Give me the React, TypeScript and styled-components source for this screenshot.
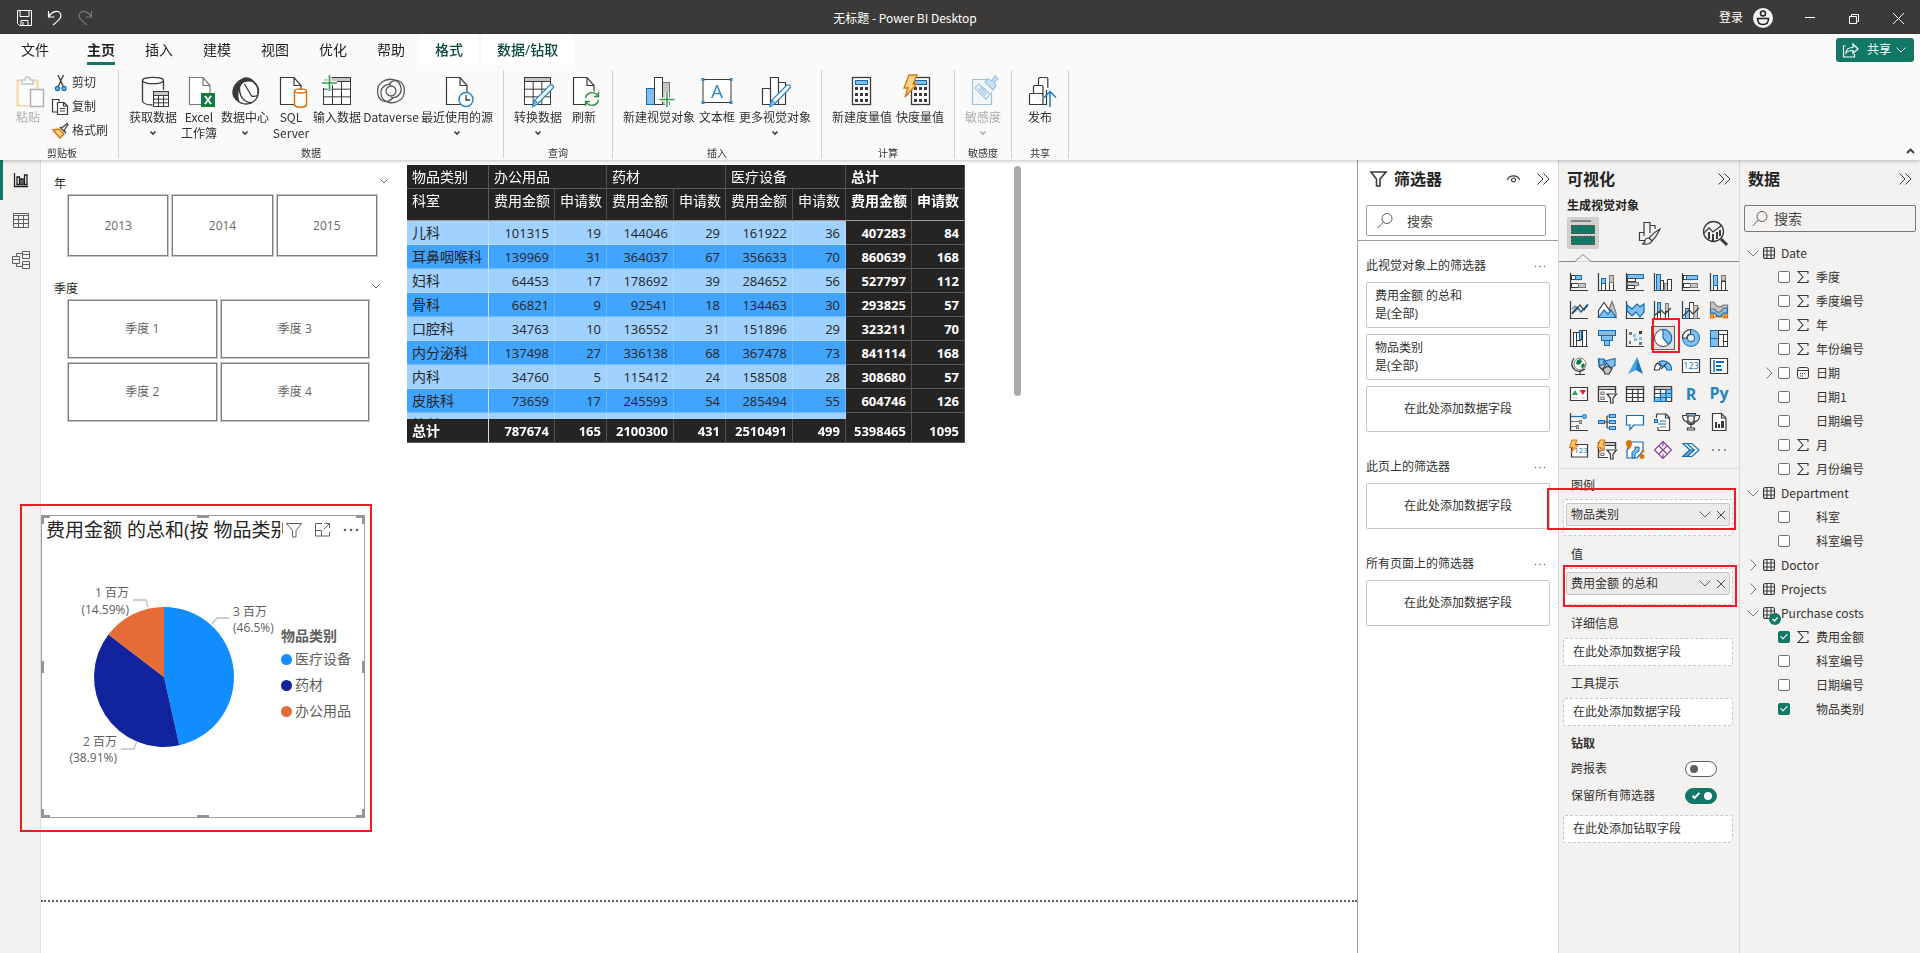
import React from "react";
import styled, { createGlobalStyle, css } from "styled-components";

const DARK = "#3b3a39";
const BLUE = "#0f6cb8";
const SKY = "#83beec";
const GREEN = "#117865";
const GREY = "#c8c6c4";
const MID = "#797775";
const ORANGE = "#d9730d";
const RED = "#ed1c24";

const Global = createGlobalStyle`
  *, *::before, *::after { box-sizing: border-box; }
  body {
    margin: 0;
    background: #fff;
    color: #323130;
    font: 12px/16px "Open Sans", "Noto Sans CJK SC", sans-serif;
  }
  button, input { font: inherit; color: inherit; }
  button { margin: 0; padding: 0; border: 0; background: none; text-align: center; }
  h2, h3 { margin: 0; font-weight: 600; }
  svg { display: block; flex: none; overflow: visible; }
`;

const Shell = styled.div`
  display: flex;
  flex-direction: column;
  min-height: 100vh;
`;

/* ---------- title bar ---------- */

const TitleBar = styled.header`
  display: grid;
  grid-template-columns: 1fr auto 1fr;
  align-items: center;
  height: 34px;
  padding: 2px 16px 0;
  background: ${DARK};
  color: #fff;
`;
const TitleLeft = styled.div`
  display: flex;
  gap: 14px;
`;
const TitleText = styled.div`
  margin-right: 110px;
  font-family: "Noto Sans CJK SC", sans-serif;
`;
const TitleRight = styled.div`
  display: flex;
  justify-content: flex-end;
  align-items: center;
`;
const SignIn = styled.button`
  display: flex;
  align-items: center;
  gap: 10px;
  margin-right: 31px;
`;
const WindowControls = styled.div`
  display: flex;
  gap: 32px;
`;
const WindowButton = styled.button`
  display: flex;
  justify-content: center;
  width: 12px;
`;

/* ---------- ribbon ---------- */

const RibbonBox = styled.div`
  position: relative;
  z-index: 3;
  height: 126px;
  background: #fafafa;
  box-shadow: 0 1px 4px rgba(0, 0, 0, 0.25);
`;
const TabRow = styled.nav`
  display: flex;
  height: 31px;
  padding-left: 6px;
`;
const Tab = styled.button<{ $active?: boolean; $context?: boolean; $after?: number }>`
  position: relative;
  padding: 0 15px;
  font-size: 14px;
  line-height: 31px;
  color: #201f1e;
  margin-right: ${(p) => p.$after ?? 0}px;
  ${(p) => p.$context && css`
    background: #fff;
    color: #0c4a40;
    font-weight: 500;
  `}
  ${(p) => p.$active && css`
    font-weight: 700;
    &::after {
      content: "";
      position: absolute;
      left: 15px;
      right: 15px;
      bottom: 0;
      height: 3px;
      background: ${GREEN};
    }
  `}
`;
const ShareButton = styled.button`
  display: flex;
  align-items: center;
  gap: 5px;
  height: 24px;
  margin: 4px 6px 0 auto;
  padding: 0 8px 0 7px;
  border-radius: 3px;
  background: ${GREEN};
  color: #fff;
  span { margin-left: 3px; }
`;
const ToolRow = styled.div`
  display: flex;
  margin-top: 5px;
`;
const Group = styled.section<{ $clip?: boolean }>`
  display: flex;
  flex-direction: column;
  height: 88px;
  padding: 0 10px 0 ${(p) => (p.$clip ? 16 : 10)}px;
  border-right: 1px solid #d2d0ce;
`;
const GroupBody = styled.div`
  display: flex;
  gap: 4px;
  flex: 1;
`;
const GroupName = styled.div`
  font-size: 10px;
  line-height: 10px;
  text-align: center;
`;
const Tool = styled.button<{ $w: number; $off?: boolean }>`
  display: flex;
  flex-direction: column;
  align-items: center;
  width: ${(p) => p.$w}px;
  padding-top: 6px;
  white-space: nowrap;
  font-family: "Noto Sans CJK SC", sans-serif;
  opacity: ${(p) => (p.$off ? 0.4 : 1)};
  svg + span { margin-top: 1px; }
  span + svg { margin-top: 6px; }
`;
const SmallTools = styled.div`
  display: flex;
  flex-direction: column;
  gap: 8px;
  margin: 5px 0 0 8px;
`;
const SmallTool = styled.button`
  display: flex;
  align-items: center;
  gap: 3px;
`;
const Collapse = styled.button`
  position: absolute;
  right: 5px;
  bottom: 6px;
`;

const Doc = ({ x = 5, c = DARK }: { x?: number; c?: string }) => (
  <path d={`M${x + 0.5} 1.5h13.5l7 8v19h-20.5zM${x + 14} 1.5v8h7`} fill="#fff" stroke={c} strokeWidth="1.2" />
);
const Pencil = () => (
  <g>
    <path d="M11 30l2-6L28 9q3-1 3.500 2.500L16 27.500z" fill="#fff" stroke="#2b88c8" strokeWidth="1.3" />
    <path d="M10.500 31l2.500-7 3.500 3.500z" fill={SKY} stroke="#2b88c8" />
  </g>
);
const Cells = ({ x, y, w, h, c = DARK }: { x: number; y: number; w: number; h: number; c?: string }) => (
  <g fill="none" stroke={c}>
    <rect x={x} y={y} width={w} height={h} fill="#fff" />
    <path d={`M${x} ${y + 2}h${w}`} stroke={GREY} strokeWidth="3" />
    <rect x={x} y={y} width={w} height={h} />
    <path d={`M${x} ${y + 4}h${w}M${x} ${y + 4 + (h - 4) / 3}h${w}M${x} ${y + 4 + ((h - 4) * 2) / 3}h${w}M${x + w / 3} ${y + 4}v${h - 4}M${x + (w * 2) / 3} ${y + 4}v${h - 4}`} />
  </g>
);
const Calc = ({ x }: { x: number }) => (
  <g>
    <rect x={x + 0.5} y="1.5" width="18" height="27" fill="#fff" stroke={DARK} strokeWidth="1.3" />
    <rect x={x + 3.5} y="4.5" width="12" height="4" fill={SKY} stroke={BLUE} />
    {[11, 17, 23].map((y) => [3, 8, 13].map((dx) => (
      <rect key={`${y}${dx}`} x={x + dx} y={y} width="3" height="3" fill={DARK} />
    )))}
  </g>
);

const toolIcons: Record<string, React.ReactNode> = {
  get: (
    <g>
      <path d="M5.500 4.500v21c2 3 6 3.500 10 3.500M26.500 4.500V14" fill="none" stroke={DARK} strokeWidth="1.3" />
      <ellipse cx="16" cy="4.5" rx="10.5" ry="3.2" fill="#fff" stroke={DARK} strokeWidth="1.3" />
      <Cells x={16.5} y={15.5} w={15} h={15} />
    </g>
  ),
  excel: (
    <g>
      <Doc x={6} c={MID} />
      <rect x="18" y="17" width="14" height="14" fill="#107c41" />
      <path d="M22 20l6 8M28 20l-6 8" stroke="#fff" strokeWidth="1.8" />
    </g>
  ),
  hub: (
    <g fill="none" stroke={DARK} strokeWidth="1.3">
      <circle cx="17" cy="15.5" r="12.5" fill="#fff" />
      <path d="M10 26Q2 22 3.500 14 5 8 9.500 6.500 15-2 23.500 3.500 24 5 24 6 16 4 12.500 8.500q-5 8-2 17.500z" fill={DARK} stroke="none" />
      <path d="M10.500 11q-.5 10 6 14 3 2 6 1.500M15.500 8l7 12q4 1 6.500-1M24 6q6 4 5 12" />
    </g>
  ),
  sql: (
    <g>
      <Doc />
      <path d="M19.500 15v14c2 3 10 3 12 0V15" fill="#fff" stroke={ORANGE} strokeWidth="1.5" />
      <ellipse cx="25.5" cy="15" rx="6" ry="2" fill="#fff" stroke={ORANGE} strokeWidth="1.5" />
    </g>
  ),
  enter: (
    <g>
      <Cells x={2.5} y={1.5} w={27} h={27} />
      <path d="M1 1h8M1 1v11" stroke="#fafafa" strokeWidth="4" />
      <path d="M8.500-1v16M1 7h15" stroke="#fafafa" strokeWidth="4" />
      <path d="M8.500-1v16M1 7h15" stroke="#2e9e4f" strokeWidth="1.6" />
    </g>
  ),
  dataverse: (
    <g fill="none" stroke="#5c5a58" strokeWidth="1.3">
      <path d="M8 25C1 22 1 10 7 6c7-5 18-3 19 6 1 7-6 11-10 9" />
      <path d="M24 5c7 3 7 15 1 19-7 5-18 3-19-6-1-7 6-11 10-9" />
      <circle cx="16" cy="15" r="5" />
      <path d="M8 25c5 2 8-1 10-3M24 5c-5-2-8 1-10 3" />
    </g>
  ),
  recent: (
    <g>
      <Doc />
      <circle cx="25" cy="23.5" r="7" fill="#fff" stroke="#2b88c8" strokeWidth="1.5" />
      <path d="M25 19v5h4" fill="none" stroke={DARK} strokeWidth="1.3" />
    </g>
  ),
  transform: (
    <g>
      <Cells x={2.5} y={1.5} w={26} h={27} />
      <Pencil />
    </g>
  ),
  refresh: (
    <g>
      <Doc />
      <circle cx="24" cy="23" r="8" fill="#fafafa" />
      <path d="M17.500 22a6.800 6.800 0 0 1 12.500-2M30.500 24a6.800 6.800 0 0 1-12.500 2M30.500 16v4.500H26M17.500 30v-4.500H22" fill="none" stroke="#2e8f48" strokeWidth="1.4" />
    </g>
  ),
  visual: (
    <g>
      <rect x="19.5" y="6.5" width="7" height="22" fill={GREY} stroke={MID} />
      <rect x="3.5" y="12.5" width="8" height="16" fill={SKY} stroke={BLUE} />
      <rect x="11.5" y="1.5" width="8" height="27" fill="#fff" stroke={DARK} />
      <path d="M24 16v15M16.500 23.500h15" stroke="#fafafa" strokeWidth="4" />
      <path d="M24 16v15M16.500 23.500h15" stroke="#2e9e4f" strokeWidth="1.5" />
    </g>
  ),
  textbox: (
    <g>
      <rect x="2" y="3.5" width="28" height="23" fill="#fff" stroke={DARK} />
      <text x="16" y="22" fontFamily="Open Sans" fontSize="19" fill="#2b88c8" textAnchor="middle">A</text>
      {[[0.5, 2], [28.5, 2], [0.5, 25], [28.5, 25]].map(([x, y]) => (
        <rect key={`${x}-${y}`} x={x} y={y} width="3" height="3" fill="#2b88c8" />
      ))}
    </g>
  ),
  more: (
    <g>
      <path d="M3.500 28.500v-16h8v16zM11.500 1.500h8v27h-8zM19.500 6.500h7v22h-7z" fill="#fff" stroke={DARK} strokeWidth="1.2" />
      <Pencil />
    </g>
  ),
  measure: <Calc x={6} />,
  quick: (
    <g>
      <Calc x={7} />
      <path d="M5-1h8L9 8h4L1 21l3-9H0z" fill="#fbd38b" stroke={ORANGE} strokeWidth="1.3" />
    </g>
  ),
  sensitivity: (
    <g stroke={BLUE} fill="none" strokeWidth="1.2">
      <path d="M20 3.500H5.500v25h19V16" fill="#e8f3fb" />
      <path d="M8 12l4-4 11 10-4 5z" fill="#fff" />
      <path d="M11.500 12.500l7 7M13 11l7 7" />
      <path d="M18 6l3-3 4 2 3-5 3 3-4 3 2 4-3 4z" fill={SKY} />
    </g>
  ),
  publish: (
    <g fill="#fff" stroke={DARK} strokeWidth="1.2">
      <path d="M14.500 10v-7.500l1-1h7.500l.8 1V12M9.500 18V10.500l1-1h7.500l1 1v18M5.500 28.500h13.500V18.500l-1-1H6.500l-1 1v9z" />
      <path d="M13.500 28.500h9V14" fill="none" />
      <path d="M26 31V15M20 21.500l6-6 6 6" fill="none" stroke="#1a7bbf" strokeWidth="1.5" />
    </g>
  ),
};

const Chevron = ({ w = 12, c = "#605e5c", t = 1 }: { w?: number; c?: string; t?: number }) => (
  <svg width={w} height={w / 2 + 1} viewBox={`0 0 ${w} ${w / 2 + 1}`} fill="none" stroke={c} strokeWidth={t} aria-hidden="true">
    <path d={`M.5.5l${w / 2 - 0.5} ${w / 2 - 0.5} ${w / 2 - 0.5}-${w / 2 - 0.5}`} />
  </svg>
);

type ToolDef = { icon: string; lines: string[]; w: number; menu?: boolean; off?: boolean };
const groups: { name: string; tools: ToolDef[] }[] = [
  {
    name: "数据",
    tools: [
      { icon: "get", lines: ["获取数据"], w: 48, menu: true },
      { icon: "excel", lines: ["Excel", "工作簿"], w: 36 },
      { icon: "hub", lines: ["数据中心"], w: 48, menu: true },
      { icon: "sql", lines: ["SQL", "Server"], w: 36 },
      { icon: "enter", lines: ["输入数据"], w: 48 },
      { icon: "dataverse", lines: ["Dataverse"], w: 52 },
      { icon: "recent", lines: ["最近使用的源"], w: 72, menu: true },
    ],
  },
  {
    name: "查询",
    tools: [
      { icon: "transform", lines: ["转换数据"], w: 48, menu: true },
      { icon: "refresh", lines: ["刷新"], w: 36 },
    ],
  },
  {
    name: "插入",
    tools: [
      { icon: "visual", lines: ["新建视觉对象"], w: 72 },
      { icon: "textbox", lines: ["文本框"], w: 36 },
      { icon: "more", lines: ["更多视觉对象"], w: 72, menu: true },
    ],
  },
  {
    name: "计算",
    tools: [
      { icon: "measure", lines: ["新建度量值"], w: 60 },
      { icon: "quick", lines: ["快度量值"], w: 48 },
    ],
  },
  { name: "敏感度", tools: [{ icon: "sensitivity", lines: ["敏感度"], w: 36, menu: true, off: true }] },
  { name: "共享", tools: [{ icon: "publish", lines: ["发布"], w: 36 }] },
];

const Ribbon = () => (
  <RibbonBox>
    <TabRow>
      <Tab $after={8}>文件</Tab>
      <Tab $active>主页</Tab>
      {["插入", "建模", "视图", "优化", "帮助"].map((t) => <Tab key={t}>{t}</Tab>)}
      <Tab $context $after={4}>格式</Tab>
      <Tab $context>数据/钻取</Tab>
      <ShareButton>
        <svg width="16" height="16" fill="none" stroke="#fff" strokeWidth="1.2">
          <path d="M2.500 4H.5v11h11v-3M3 11c0-4 3-5.500 7-5.500V2l5 5-5 4.500V8.500C6 8.500 4 9.500 3 11z" />
        </svg>
        <span>共享</span>
        <Chevron w={10} c="#fff" />
      </ShareButton>
    </TabRow>
    <ToolRow>
      <Group $clip>
        <GroupBody>
          <Tool $w={24} $off>
            <svg width="32" height="32" fill="#fff" strokeWidth="1.4">
              <path d="M5.500 4.500h20v25h-20z" fill="#fdf1dd" stroke="#f0a030" strokeWidth="2" />
              <path d="M8 9h15v20H8z" stroke="none" />
              <path d="M10 8V4h3c0-4 5-4 5 0h3v4z" stroke={MID} />
              <path d="M18.500 13.500h13v17h-13z" stroke={DARK} />
            </svg>
            <span>粘贴</span>
          </Tool>
          <SmallTools>
            <SmallTool>
              <svg width="17" height="16" fill="none" stroke={DARK} strokeWidth="1.3">
                <path d="M6 0l5.500 12M11.500 0L6 12" />
                <circle cx="5.5" cy="13.5" r="2" fill={SKY} stroke={BLUE} />
                <circle cx="12" cy="13.5" r="2" fill={SKY} stroke={BLUE} />
              </svg>
              剪切
            </SmallTool>
            <SmallTool>
              <svg width="17" height="16" fill="#fff" stroke={DARK} strokeWidth="1.2">
                <path d="M7 2.500V.5H.5v12.500H5M5.500 3.500h6.500l3.500 3.500v8.500h-10zM11.500 3.500V7h4M8 9.500h5M8 12h5" />
              </svg>
              复制
            </SmallTool>
            <SmallTool>
              <svg width="17" height="16" fill="none" stroke={DARK} strokeWidth="1.2">
                <path d="M1 7l6-1 5 5-4 4z" fill="#fbd38b" stroke={ORANGE} strokeWidth="1.5" />
                <path d="M8 4l6 6M9 5l2-1 4-3.500 1 1L13 6l-.5 2.500" fill="#fff" />
              </svg>
              格式刷
            </SmallTool>
          </SmallTools>
        </GroupBody>
        <GroupName>剪贴板</GroupName>
      </Group>
      {groups.map((g) => (
        <Group key={g.name}>
          <GroupBody>
            {g.tools.map((t) => (
              <Tool key={t.icon} $w={t.w} $off={t.off}>
                <svg width="32" height="32" aria-hidden="true">{toolIcons[t.icon]}</svg>
                {t.lines.map((l) => <span key={l}>{l}</span>)}
                {t.menu && <Chevron w={6} c={DARK} t={1.6} />}
              </Tool>
            ))}
          </GroupBody>
          <GroupName>{g.name}</GroupName>
        </Group>
      ))}
    </ToolRow>
    <Collapse aria-label="折叠功能区">
      <svg width="9" height="6" fill="none" stroke={DARK} strokeWidth="1.8"><path d="M1 5l3.500-3.500L8 5" /></svg>
    </Collapse>
  </RibbonBox>
);

/* ---------- workspace ---------- */

const Workspace = styled.div`
  display: flex;
  flex: 1;
`;
const Rail = styled.nav`
  flex: none;
  width: 41px;
  background: #f3f2f1;
  border-right: 1px solid #e1dfdd;
`;
const RailButton = styled.button<{ $active?: boolean }>`
  display: flex;
  align-items: center;
  justify-content: center;
  width: 40px;
  height: 40px;
  padding-right: 2px;
  border-left: 3px solid ${(p) => (p.$active ? GREEN : "transparent")};
`;
const Canvas = styled.main`
  flex: 1;
  min-width: 0;
`;
const TopVisuals = styled.div`
  display: flex;
  padding-top: 5px;
`;
const Slicers = styled.div`
  width: 366px;
  padding: 8px 0 0 13px;
`;
const Slicer = styled.section<{ $w: number }>`
  width: ${(p) => p.$w}px;
  margin-bottom: 21px;
`;
const SlicerHead = styled.div`
  display: flex;
  justify-content: space-between;
  align-items: center;
  height: 21px;
  color: #201f1e;
  svg { margin-bottom: 4px; }
`;
const Tiles = styled.div<{ $cols: number }>`
  display: grid;
  grid-template-columns: repeat(${(p) => p.$cols}, 1fr);
  gap: ${(p) => (p.$cols === 2 ? "3px 2px" : "2px")};
  margin: 0 10px 0 13px;
`;
const Tile = styled.button<{ $h: number }>`
  height: ${(p) => p.$h}px;
  border: 1px solid #c8c6c4;
  box-shadow: inset 0 0 0 1px #7f7d7b;
  background: #fff;
  color: #666;
`;

const MatrixBox = styled.div`
  width: 558px;
  height: 278px;
  overflow: hidden;
`;
const Matrix = styled.table`
  width: 100%;
  table-layout: fixed;
  border-collapse: separate;
  border-spacing: 0;
  font-size: 13px;
  line-height: 18px;
  th, td {
    height: 24px;
    padding: 0 5px;
    text-align: right;
    white-space: nowrap;
    font-weight: 400;
    border-right: 1px solid rgba(255, 255, 255, 0.2);
    border-bottom: 1px solid rgba(255, 255, 255, 0.25);
  }
  th { font-size: 14px; text-align: left; }
  th:first-child { border-right: 1px solid #c8dff2; }
  thead th:first-child { border-right-color: #5a5958; }
  thead, tfoot { position: sticky; z-index: 1; background: #252423; color: #fff; }
  thead { top: 0; }
  tfoot { bottom: 0; }
  thead tr:last-child th { height: 32px; padding-top: 3px; vertical-align: top; border-bottom-color: #a19f9d; }
  thead tr:last-child th:nth-child(odd):not(:first-child) { text-align: right; }
  tfoot th, tfoot td, thead th.total { font-weight: 700; }
  tbody tr { background: #a0d1ff; color: #252423; }
  tbody tr:nth-child(even) { background: #41a4ff; }
  tbody td.total { background: #252423; color: #fff; font-weight: 700; }
`;
const ScrollThumb = styled.div`
  width: 7px;
  height: 230px;
  margin: 1px 0 0 49px;
  border-radius: 4px;
  background: #aaa9a8;
`;

const colWidths = [82, 66, 52, 67, 52, 67, 53, 66, 53];
const rows: (string | number)[][] = [
  ["儿科", 101315, 19, 144046, 29, 161922, 36, 407283, 84],
  ["耳鼻咽喉科", 139969, 31, 364037, 67, 356633, 70, 860639, 168],
  ["妇科", 64453, 17, 178692, 39, 284652, 56, 527797, 112],
  ["骨科", 66821, 9, 92541, 18, 134463, 30, 293825, 57],
  ["口腔科", 34763, 10, 136552, 31, 151896, 29, 323211, 70],
  ["内分泌科", 137498, 27, 336138, 68, 367478, 73, 841114, 168],
  ["内科", 34760, 5, 115412, 24, 158508, 28, 308680, 57],
  ["皮肤科", 73659, 17, 245593, 54, 285494, 55, 604746, 126],
  ["外科", 102946, 23, 232463, 64, 436500, 91, 868984, 168],
];

const MatrixVisual = () => (
  <MatrixBox>
    <Matrix>
      <colgroup>{colWidths.map((w, i) => <col key={i} width={w} />)}</colgroup>
      <thead>
        <tr>
          <th>物品类别</th>
          <th colSpan={2}>办公用品</th>
          <th colSpan={2}>药材</th>
          <th colSpan={2}>医疗设备</th>
          <th colSpan={2} className="total">总计</th>
        </tr>
        <tr>
          <th>科室</th>
          {[0, 1, 2, 3].map((i) => (
            <React.Fragment key={i}>
              <th className={i === 3 ? "total" : undefined}>费用金额</th>
              <th className={i === 3 ? "total" : undefined}>申请数</th>
            </React.Fragment>
          ))}
        </tr>
      </thead>
      <tbody>
        {rows.map(([name, ...vals]) => (
          <tr key={name}>
            <th scope="row">{name}</th>
            {vals.map((v, i) => <td key={i} className={i > 5 ? "total" : undefined}>{v}</td>)}
          </tr>
        ))}
      </tbody>
      <tfoot>
        <tr>
          <th scope="row">总计</th>
          {[787674, 165, 2100300, 431, 2510491, 499, 5398465, 1095].map((v, i) => <td key={i}>{v}</td>)}
        </tr>
      </tfoot>
    </Matrix>
  </MatrixBox>
);

/* ---------- pie chart ---------- */

const Mark = styled.div<{ $inset: string }>`
  position: absolute;
  inset: ${(p) => p.$inset};
  z-index: 2;
  border: 2px solid ${RED};
  pointer-events: none;
`;
const ChartVisual = styled.section`
  position: relative;
  width: 324px;
  height: 303px;
  margin-top: 72px;
  border: 1px solid #a19f9d;
`;
const ChartHead = styled.div`
  display: flex;
  align-items: center;
  height: 28px;
  padding: 0 5px 0 4px;
  h3 {
    width: 238px;
    overflow: hidden;
    white-space: nowrap;
    font-size: 19px;
    line-height: 28px;
    font-weight: 400;
    color: #252423;
  }
  button { margin-left: 13px; }
  button:first-of-type { margin-left: 3px; }
`;
const ChartBody = styled.div`
  display: flex;
`;
const Legend = styled.ul`
  margin: 0;
  padding: 82px 0 0;
  list-style: none;
  font-size: 14px;
  line-height: 26px;
  color: #605e5c;
`;
const LegendTitle = styled.li`
  font-weight: 600;
  line-height: 20px;
`;
const LegendItem = styled.li<{ $c: string }>`
  display: flex;
  align-items: center;
  gap: 3px;
  white-space: nowrap;
  &::before {
    content: "";
    width: 11px;
    height: 11px;
    border-radius: 50%;
    background: ${(p) => p.$c};
  }
`;
const Handles = styled.svg`
  position: absolute;
  top: -2px;
  left: -1px;
`;

const R = 70;
const CX = 122;
const CY = 133;
const point = (f: number) => `${CX + R * Math.sin(f * 2 * Math.PI)} ${CY - R * Math.cos(f * 2 * Math.PI)}`;
const slice = (a: number, b: number) => `M${CX} ${CY}L${point(a)}A${R} ${R} 0 0 1 ${point(b)}Z`;

const PieVisual = () => (
  <ChartVisual>
    <ChartHead>
      <h3>费用金额 的总和(按 物品类别)</h3>
      <button aria-label="筛选器">
        <svg width="16" height="15" fill="none" stroke="#605e5c"><path d="M.5.5h15L10 7.500v6.500H6.500V7.500z" /></svg>
      </button>
      <button aria-label="焦点模式">
        <svg width="15" height="14" fill="none" stroke="#605e5c">
          <path d="M7 .5H.5v12.500h14V9M.5 7.500h6v5.500M9.500.5h5V5M14.500.5L8.500 6.500" />
        </svg>
      </button>
      <button aria-label="更多选项">
        <svg width="16" height="4" fill="#605e5c"><circle cx="2" cy="2" r="1.3" /><circle cx="8" cy="2" r="1.3" /><circle cx="14" cy="2" r="1.3" /></svg>
      </button>
    </ChartHead>
    <ChartBody>
      <svg width="239" height="260" fontSize="12" fill="#605e5c">
        <path d={slice(0, 0.465)} fill="#118dff" />
        <path d={slice(0.465, 0.8541)} fill="#12239e" />
        <path d={slice(0.8541, 1)} fill="#e66c37" />
        <g fill="none" stroke="#c0bebc" strokeWidth="1.3">
          <path d="M91 56h13l2 7M187 74h-12l-5 6M79 205h13l3-8" />
        </g>
        <text x="87" y="53" textAnchor="end">1 百万</text>
        <text x="87" y="70" textAnchor="end">(14.59%)</text>
        <text x="191" y="72">3 百万</text>
        <text x="191" y="88">(46.5%)</text>
        <text x="75" y="202" textAnchor="end">2 百万</text>
        <text x="75" y="218" textAnchor="end">(38.91%)</text>
      </svg>
      <Legend>
        <LegendTitle>物品类别</LegendTitle>
        <LegendItem $c="#118dff">医疗设备</LegendItem>
        <LegendItem $c="#12239e">药材</LegendItem>
        <LegendItem $c="#e66c37">办公用品</LegendItem>
      </Legend>
    </ChartBody>
    <Handles width="324" height="305" fill="none" stroke="#979593" strokeWidth="3">
      <path d="M1.500 10V2.500H9M315 2.500h7.500V10M1.500 295v7.500H9M315 302.500h7.500V295M156 2.500h12M156 302.500h12M1.500 147v12M322.500 147v12" />
    </Handles>
    <Mark $inset="-12px -8px -15px -22px" />
  </ChartVisual>
);
const PageEdge = styled.div`
  height: 0;
  margin-top: 82px;
  border-top: 2px dotted #605e5c;
`;

/* ---------- side panes ---------- */

const Pane = styled.aside<{ $w: number; $white?: boolean }>`
  flex: none;
  width: ${(p) => p.$w}px;
  background: ${(p) => (p.$white ? "#fff" : "#f3f2f1")};
  border-left: 1px solid ${(p) => (p.$white ? "#a19f9d" : "#dad8d6")};
`;
const PaneHead = styled.div`
  display: flex;
  align-items: center;
  height: 38px;
  padding: 0 8px;
  h2 {
    flex: 1;
    font-size: 16px;
    line-height: 24px;
    color: #252423;
  }
  svg + h2 { margin-left: 4px; }
  button + button { margin-left: 17px; }
`;
const Search = styled.label<{ $wide?: boolean }>`
  display: flex;
  align-items: center;
  gap: ${(p) => (p.$wide ? 6 : 14)}px;
  height: ${(p) => (p.$wide ? 27 : 31)}px;
  margin: ${(p) => (p.$wide ? "7px 4px 9px" : "7px 12px 4px 8px")};
  padding-left: ${(p) => (p.$wide ? 7 : 10)}px;
  border: 1px solid ${(p) => (p.$wide ? "#797775" : "#a19f9d")};
  border-radius: 2px;
  font-size: ${(p) => (p.$wide ? 14 : 13)}px;
  input {
    flex: 1;
    min-width: 0;
    padding: 0;
    border: 0;
    outline: 0;
    background: none;
  }
  input::placeholder { color: #484644; opacity: 1; }
`;
const SearchIcon = () => (
  <svg width="16" height="16" fill="none" stroke="#605e5c"><circle cx="10" cy="5.5" r="5" /><path d="M6.500 9L.5 15" /></svg>
);
const Expand = () => (
  <button aria-label="折叠窗格">
    <svg width="13" height="12" fill="none" stroke={DARK}><path d="M.5.5L6 6 .5 11.500M6.500.5L12 6l-5.500 5.500" /></svg>
  </button>
);

const FilterSection = styled.section<{ $top: number }>`
  padding: ${(p) => p.$top}px 8px 0;
`;
const FilterHead = styled.div`
  display: flex;
  justify-content: space-between;
  align-items: center;
  margin-bottom: 8px;
  padding-right: 4px;
`;
const FilterCard = styled.div<{ $empty?: boolean }>`
  height: 46px;
  margin-bottom: 6px;
  padding: 4px 8px;
  border: 1px solid #c8c6c4;
  border-radius: 2px;
  line-height: ${(p) => (p.$empty ? 36 : 18)}px;
  text-align: ${(p) => (p.$empty ? "center" : "left")};
`;
const FilterDivider = styled.div`
  border-top: 1px solid #a19f9d;
`;
const Dots = () => (
  <button aria-label="更多">
    <svg width="12" height="4" fill={MID}><path d="M1 2h1v1H1zM5.500 2h1v1h-1zM10 2h1v1h-1z" stroke={MID} strokeWidth=".4" /></svg>
  </button>
);

const FiltersPane = () => (
  <Pane $w={201} $white>
    <PaneHead>
      <svg width="24" height="16" fill="none" stroke={DARK} strokeWidth="1.6"><path d="M5 1h15l-6 7v7h-3.500V8z" /></svg>
      <h2>筛选器</h2>
      <button aria-label="显示筛选器">
        <svg width="13" height="8" fill="none" stroke={DARK} strokeWidth="1.2"><path d="M.5 5C2-.5 11-.5 12.500 5" /><circle cx="6.5" cy="5" r="2" /></svg>
      </button>
      <Expand />
    </PaneHead>
    <Search>
      <SearchIcon />
      <input placeholder="搜索" aria-label="搜索筛选器" />
    </Search>
    <FilterDivider />
    <FilterSection $top={17}>
      <FilterHead>此视觉对象上的筛选器<Dots /></FilterHead>
      <FilterCard>费用金额 的总和<br />是(全部)</FilterCard>
      <FilterCard>物品类别<br />是(全部)</FilterCard>
      <FilterCard $empty>在此处添加数据字段</FilterCard>
    </FilterSection>
    <FilterSection $top={21}>
      <FilterHead>此页上的筛选器<Dots /></FilterHead>
      <FilterCard $empty>在此处添加数据字段</FilterCard>
    </FilterSection>
    <FilterSection $top={21}>
      <FilterHead>所有页面上的筛选器<Dots /></FilterHead>
      <FilterCard $empty>在此处添加数据字段</FilterCard>
    </FilterSection>
  </Pane>
);

/* ---------- visualizations pane ---------- */

const kinds = {
  w: { fill: "#fff", stroke: DARK },
  b: { fill: SKY, stroke: BLUE },
  g: { fill: GREY, stroke: MID },
};
const B = ({ k, at: [x, y, width, height] }: { k: keyof typeof kinds; at: number[] }) => (
  <rect x={x + 0.5} y={y + 0.5} width={width} height={height} {...kinds[k]} />
);
const Axis = () => <path d="M.5 0v17.500H18" fill="none" stroke={DARK} strokeWidth="1.2" />;
const Line = ({ d, c = DARK, f = "none" }: { d: string; c?: string; f?: string }) => <path d={d} fill={f} stroke={c} strokeWidth="1.2" />;
const Bolt = () => <path d="M2-1h5L5 4h3L1 12l2-5.500H-.5z" fill="#fbc56d" stroke={ORANGE} />;
const Num = ({ x, size = 10 }: { x: number; size?: number }) => (
  <text x={x} y="12" fontSize={size} fill={BLUE} textAnchor="middle">123</text>
);
const TableGrid = () => (
  <g>
    <Line f="#fff" d="M.5 1.500h17v15H.5z" />
    <rect x="1" y="1" width="16" height="3" fill={GREY} />
    <Line d="M.5 1.500h17v15H.5zM.5 4.500h17M.5 8.500h17M.5 12.500h17M6.500 4.500v12M12 4.500v12" />
  </g>
);
const SlicerGlyph = () => (
  <g>
    <Line f="#fff" d="M.5 1.500h17v15H.5z" />
    <rect x="1" y="1" width="16" height="3" fill={GREY} />
    <path d="M9 8h10v10H9z" fill="#f3f2f1" />
    <Line d="M17.500 7V1.500H.5v15H10M.5 4.500h17" />
    <Line c={MID} d="M3 7h3v2.500H3zM3 12h3v2.500H3z" />
    <Line f="#fff" d="M9 9h9.500l-3.500 4v5h-2.500v-5z" />
  </g>
);

const vizIcons: [string, React.ReactNode][] = [
  ["堆积条形图", <><Axis /><B k="w" at={[1, 2, 5, 4]} /><B k="b" at={[5, 2, 6, 4]} /><B k="w" at={[1, 10, 7, 4]} /><B k="g" at={[8, 10, 7, 4]} /></>],
  ["堆积柱形图", <><Axis /><B k="w" at={[3, 10, 4, 7]} /><B k="b" at={[3, 5, 4, 5]} /><B k="w" at={[11, 9, 4, 8]} /><B k="g" at={[11, 2, 4, 7]} /></>],
  ["簇状条形图", <><Axis /><B k="b" at={[1, 1, 16, 4]} /><B k="w" at={[1, 5, 8, 3]} /><B k="g" at={[1, 9, 11, 3]} /><B k="w" at={[1, 12, 7, 3]} /></>],
  ["簇状柱形图", <><Axis /><B k="b" at={[2, 1, 4, 16]} /><B k="w" at={[6, 7, 3, 10]} /><B k="g" at={[10, 10, 3, 7]} /><B k="w" at={[13, 6, 4, 11]} /></>],
  ["百分比堆积条形图", <><Axis /><B k="w" at={[1, 2, 4, 4]} /><B k="b" at={[4, 2, 11, 4]} /><B k="w" at={[1, 10, 7, 4]} /><B k="g" at={[8, 10, 7, 4]} /></>],
  ["百分比堆积柱形图", <><Axis /><B k="w" at={[3, 12, 4, 5]} /><B k="b" at={[3, 2, 4, 10]} /><B k="w" at={[11, 8, 4, 9]} /><B k="g" at={[11, 2, 4, 5]} /></>],
  ["折线图", <><Axis /><Line c={MID} d="M2 8l3-3 6 6 6-6" /><Line c={BLUE} d="M2 12l5-6 4 5 7-8" /><Line d="M2 13l4-4 4-5 4 5 4-5" /></>],
  ["分区图", <><Line c={MID} f={GREY} d="M8 16l6-15.500 4 11v5z" /><Line f="#fff" d="M.5 9.500L6 1.500l7 10-6 5H.5z" /><Line c={BLUE} f={SKY} d="M.5 16.500L6 9l4 4 3-4 5 7.500z" /></>],
  ["堆积面积图", <><Axis /><Line c={BLUE} f={SKY} d="M1 4l5 4 5-5 3 3 4-3v8l-4 5-4-5-4 4-5-5z" /></>],
  ["折线和堆积柱形图", <><Axis /><B k="b" at={[3, 1, 3, 10]} /><B k="w" at={[3, 11, 3, 6]} /><B k="g" at={[11, 2, 3, 8]} /><B k="w" at={[11, 10, 3, 7]} /><Line d="M1 14l6-5 4 4 6-6" /></>],
  ["折线和簇状柱形图", <><Axis /><B k="b" at={[3, 7, 4, 10]} /><B k="w" at={[7, 1, 4, 16]} /><B k="g" at={[11, 4, 4, 13]} /><Line d="M1 15l6-6 4 4 6-6" /></>],
  ["功能区图表", <><Line c={ORANGE} f="#f3a04c" d="M.5 12h3v5h-3zM14 12h3.500v5H14zM5 16q4-3 8 0z" /><Line c={BLUE} f={SKY} d="M.5 7h4q4 8 9 0h4v5h-4q-4 7-9 0h-4z" /><Line c={MID} f={GREY} d="M.5 1h3q5 8 10 3h4v3h-4q-5 8-9 1h-4z" /></>],
  ["瀑布图", <><Axis /><B k="w" at={[3, 3, 3, 14]} /><B k="w" at={[6, 3, 4, 8]} /><B k="b" at={[9, 1, 2, 9]} /><B k="w" at={[12, 1, 4, 16]} /></>],
  ["漏斗图", <><B k="b" at={[0, 1, 17, 5]} /><B k="b" at={[3, 6, 11, 5]} /><B k="b" at={[6, 11, 5, 5]} /></>],
  ["散点图", <><Axis /><path d="M3 3h3v3H3zM3 12h2v3H3zM13 13h3v3h-3z" fill={MID} /><path d="M13 2h3v3h-3z" fill={DARK} /><path d="M7 5h3v3H7zM8 9h3v3H8zM13 8h3v3h-3z" fill={SKY} /></>],
  ["饼图", <><circle cx="9" cy="9" r="8.5" {...kinds.w} /><Line c={BLUE} f={SKY} d="M9 .5a8.500 8.500 0 0 1 5.500 15L9 9z" /></>],
  ["环形图", <><circle cx="9" cy="9" r="6" fill="none" stroke={BLUE} strokeWidth="6" /><circle cx="9" cy="9" r="6" fill="none" stroke={SKY} strokeWidth="4" /><Line f="#fff" d="M8.500.5A8.500 8.500 0 0 0 .5 9H5q0-4 3.500-4z" /></>],
  ["树状图", <><B k="b" at={[0, 1, 8, 8]} /><B k="b" at={[0, 9, 8, 8]} /><B k="w" at={[8, 1, 9, 4]} /><B k="w" at={[8, 5, 5, 12]} /><B k="w" at={[13, 5, 4, 7]} /><B k="w" at={[13, 12, 4, 5]} /></>],
  ["地图", <><circle cx="10" cy="7" r="6" fill="#fff" stroke={MID} /><path d="M7 3l4-1 1 3-3 3-3-1zM11 8l3-2 1 3-3 3z" fill="#0f7b3f" /><Line d="M4 1Q-1 8 5 13q5 3 10-1M10 14v3M5 17.500h10" /></>],
  ["着色地图", <><Line f={GREY} d="M.5 2l6 1 2 3-4 7-3-3z" /><Line c={BLUE} f={SKY} d="M7 4l10-2.500v7L13 11l-4-4zM1 2h5v5L1 9z" /><Line f={GREY} d="M5 12l5-3 4 3-3 5H7z" /></>],
  ["Azure 地图", <><path d="M11 0L2 17l8-4z" fill="#44a8e0" /><path d="M11 0l-1 13 7 4z" fill="#1a75b8" /></>],
  ["仪表", <><Line f="#fff" d="M.5 13a8.500 8.500 0 0 1 3-7L7 9l-2 4z" /><Line c={BLUE} f={SKY} d="M5 5a8.500 8.500 0 0 1 12.500 8H13q-1-4-5-4z" /><Line d="M7 12l6-6" /></>],
  ["卡片图", <><Line f="#fff" d="M.5 2.500h17v13H.5z" /><Num x={9} size={9} /></>],
  ["多行卡", <><Line f="#fff" d="M.5 1.500h17v15H.5z" /><path d="M4 3v12" stroke={BLUE} strokeWidth="1.5" /><path d="M6 5h8M6 9h5M6 13h6" stroke={BLUE} strokeWidth="1.8" /></>],
  ["KPI", <><Line f="#fff" d="M.5 2.500h17v13H.5z" /><path d="M2 10l3-5 3 5z" fill="#2e9e4f" /><path d="M9.500 5h6.500l-3 5z" fill={RED} /><path d="M3 13h5M10 13h5" stroke={GREY} /></>],
  ["切片器", <SlicerGlyph />],
  ["表", <TableGrid />],
  ["矩阵", <><TableGrid /><Line c={BLUE} f={SKY} d="M12 4.500h5.500v8H12zM.5 12.500h11.500v4H.5zM6.500 8.500H12v8H6.500z" /><Line c={BLUE} d="M12 8.500h5.500M12 12.500v4" /></>],
  ["R 脚本视觉对象", <text x="9" y="15" fontSize="16" fontWeight="700" fill="#2583c4" textAnchor="middle">R</text>],
  ["Python 视觉对象", <text x="9" y="14" fontSize="16" fontWeight="700" fill="#2583c4" textAnchor="middle">Py</text>],
  ["关键影响者", <><Axis /><Line c={BLUE} d="M1 3.500h11" /><circle cx="14.5" cy="3.5" r="2" {...kinds.b} /><Line c={MID} d="M1 8.500h8M1 13.500h5" /><B k="g" at={[9, 7, 2, 3]} /><B k="g" at={[6, 12, 2, 3]} /></>],
  ["分解树", <><Line d="M6 9h3M9 3v12M9 3h3M9 9h3M9 15h3" /><B k="b" at={[0, 7, 6, 3]} /><B k="b" at={[11, 1, 6, 3]} /><B k="b" at={[11, 7, 6, 3]} /><B k="b" at={[11, 13, 6, 3]} /></>],
  ["问答", <Line c={BLUE} f="#fff" d="M.5 2.500h17v9.500H8l-4 4.500V12H.5z" />],
  ["智能叙述", <><Line f="#fff" d="M2.500 1H12l3.500 3.500v13H4V14M2.500 5V1M11.500 1v4h4" /><B k="b" at={[0, 6, 3, 3]} /><path d="M6 8h6M4 11h8" stroke={BLUE} /><path d="M6 14h6" stroke={MID} /></>],
  ["目标", <><Line f={SKY} d="M4.500.5h9v7q-1 4-4.500 4t-4.500-4z" /><Line f="#fff" d="M6 3h6v5l-3 2.500L6 8zM4.500 2.500h-4q0 6 5 6M13.500 2.500h4q0 6-5 6M9 11.500V15M5.500 17v-2h7v2z" /></>],
  ["分页报表", <><Line f="#fff" d="M2.500.5h9l4.500 4.500v12.500H2.500zM11.500.5V5H16" /><path d="M5 9h2v6H5zM8 11h2v4H8zM11 8h3v7h-3z" fill={DARK} /></>],
  ["卡片图（新）", <><Line f="#fff" d="M1.500 3.500h16v12.500h-16z" /><Num x={11} size={8} /><Bolt /></>],
  ["切片器（新）", <><SlicerGlyph /><Bolt /></>],
  ["ArcGIS Maps", <><Line c={BLUE} f="#fff" d="M5 1h12v9l-6 7H1V9z" /><path d="M9 6h4v4l-4 3v4H6v-6l3-2z" fill={SKY} stroke={BLUE} /><path d="M3-1a3 3 0 0 1 3 3.500Q6 5 3 9 0 5 0 2.500A3 3 0 0 1 3-1z" fill={ORANGE} /><circle cx="16" cy="15.5" r="2.5" fill={ORANGE} /><circle cx="17" cy="10" r="1.5" fill={ORANGE} /></>],
  ["Power Apps", <Line c="#8a3f9e" f="#fff" d="M9 .5L17.500 9 9 17.500.5 9zM5 5l8 8M13 5l-8 8M9 1v4M9 13v4" />],
  ["Power Automate", <><Line c={BLUE} f="#fff" d="M1 2.500h9L17 9l-7 6.500H1L8 9z" /><Line c={BLUE} d="M5 2.500L12 9l-7 6.500" /><Line c={BLUE} f={SKY} d="M1 15.500L8 9h4l-7 6.500z" /></>],
  ["获取更多视觉对象", <path d="M2 9h2M8 9h2M14 9h2" stroke={MID} strokeWidth="1.5" />],
];

const VizSub = styled.h3`
  padding-left: 8px;
  font-size: 12px;
  line-height: 16px;
  color: #252423;
`;
const Modes = styled.div`
  position: relative;
  display: flex;
  justify-content: space-between;
  height: 48px;
  padding: 3px 8px 0;
  border-bottom: 1px solid #8a8886;
`;
const Mode = styled.button<{ $on?: boolean }>`
  display: flex;
  align-items: center;
  justify-content: center;
  width: 32px;
  height: 32px;
  border-radius: 2px;
  background: ${(p) => (p.$on ? "#d2d0ce" : "none")};
`;
const Notch = styled.svg`
  position: absolute;
  left: 16px;
  bottom: -1px;
`;
const Gallery = styled.div`
  display: grid;
  grid-template-columns: repeat(6, 28px);
  grid-auto-rows: 28px;
  padding: 6px 0 4px 6px;
  border-bottom: 1px solid #dad8d6;
`;
const VizButton = styled.button<{ $on?: boolean }>`
  position: relative;
  display: flex;
  align-items: center;
  justify-content: center;
  margin: 2px;
  ${(p) => p.$on && css`
    background: #e1dfdd;
    border: 1px solid #605e5c;
  `}
`;
const Wells = styled.div`
  padding-top: 9px;
`;
const WellName = styled.h3<{ $bold?: boolean }>`
  padding-left: 12px;
  line-height: 16px;
  font-size: 12px;
  font-weight: ${(p) => (p.$bold ? 600 : 400)};
`;
const Well = styled.div<{ $filled?: boolean }>`
  position: relative;
  height: ${(p) => (p.$filled ? 37 : 28)}px;
  margin: ${(p) => (p.$filled ? "5px 6px 11px 4px" : "6px 6px 10px 4px")};
  padding: ${(p) => (p.$filled ? "3px 2px" : "0 9px")};
  border: 1px dashed #c8c6c4;
  border-radius: 2px;
  background: #fff;
  line-height: 26px;
`;
const Chip = styled.div`
  display: flex;
  align-items: center;
  gap: 6px;
  height: 23px;
  padding: 0 4px;
  border: 1px solid #c8c6c4;
  border-radius: 2px;
  background: #edebe9;
  span { flex: 1; }
`;
const Switches = styled.div`
  padding-top: 3px;
`;
const SwitchRow = styled.label`
  display: flex;
  align-items: center;
  justify-content: space-between;
  height: 27px;
  padding: 0 22px 0 12px;
`;
const Switch = styled.input`
  position: relative;
  appearance: none;
  width: 32px;
  height: 16px;
  margin: 0;
  border: 1px solid #605e5c;
  border-radius: 8px;
  background: #fff;
  &::before {
    content: "";
    position: absolute;
    top: 3px;
    left: 4px;
    width: 8px;
    height: 8px;
    border-radius: 50%;
    background: #605e5c;
  }
  &:checked { background: ${GREEN}; border-color: ${GREEN}; }
  &:checked::before { left: 18px; background: #fff; }
  &:checked::after {
    content: "";
    position: absolute;
    top: 2px;
    left: 8px;
    width: 4px;
    height: 8px;
    border: solid #fff;
    border-width: 0 2px 2px 0;
    transform: rotate(45deg);
  }
`;

const FieldChip = ({ name }: { name: string }) => (
  <Chip>
    <span>{name}</span>
    <button aria-label={`${name} 选项`}><Chevron w={12} /></button>
    <button aria-label={`删除 ${name}`}>
      <svg width="8" height="8" fill="none" stroke="#484644"><path d="M0 0l8 8M8 0L0 8" /></svg>
    </button>
  </Chip>
);

const VizPane = () => (
  <Pane $w={181}>
    <PaneHead><h2>可视化</h2><Expand /></PaneHead>
    <VizSub>生成视觉对象</VizSub>
    <Modes>
      <Mode $on aria-label="生成视觉对象">
        <svg width="24" height="24">
          <path d="M0 0h20" stroke={DARK} />
          <g fill={GREEN} stroke={DARK} strokeDasharray="2 1"><rect x=".5" y="4.5" width="23" height="8" /><rect x=".5" y="15.5" width="23" height="8" /></g>
        </svg>
      </Mode>
      <Mode aria-label="设置视觉对象格式">
        <svg width="24" height="24" fill="#f3f2f1" stroke={DARK} strokeWidth="1.2">
          <path d="M8 19.500H2.500v-8H7M7 15V1.500h6V12M13 4.500h5V8" />
          <path d="M23 8Q17 11 12 17l3 3q5-5 8-12zM12 17q-4 0-4 3-1 3-3 3 8 1 10-3z" />
        </svg>
      </Mode>
      <Mode aria-label="分析">
        <svg width="24" height="24" fill="none" stroke={DARK} strokeWidth="1.3">
          <circle cx="10.5" cy="10.5" r="10" />
          <path d="M18 18l6 6" strokeWidth="3" />
          <path d="M1 12l5-5 4 4 9-7" /><path d="M6 11v7M10 13v7M14 11v7M17 9v6" strokeWidth="2" />
        </svg>
      </Mode>
      <Notch width="16" height="8" fill="#f3f2f1" stroke="#8a8886"><path d="M0 7.500L8 .5l8 7" /><path d="M1 8h14" stroke="#f3f2f1" /></Notch>
    </Modes>
    <Gallery>
      {vizIcons.map(([name, icon]) => (
        <VizButton key={name} aria-label={name} $on={name === "饼图"}>
          <svg width="18" height="18">{icon}</svg>
          {name === "饼图" && <Mark $inset="-9px -6px -4px 0px" />}
        </VizButton>
      ))}
    </Gallery>
    <Wells>
      <WellName>图例</WellName>
      <Well $filled><FieldChip name="物品类别" /><Mark $inset="-12px -4px 5px -17px" /></Well>
      <WellName>值</WellName>
      <Well $filled><FieldChip name="费用金额 的总和" /><Mark $inset="-4px -5px -3px -1px" /></Well>
      <WellName>详细信息</WellName>
      <Well>在此处添加数据字段</Well>
      <WellName>工具提示</WellName>
      <Well>在此处添加数据字段</Well>
      <WellName $bold>钻取</WellName>
      <Switches>
        <SwitchRow>跨报表<Switch type="checkbox" role="switch" /></SwitchRow>
        <SwitchRow>保留所有筛选器<Switch type="checkbox" role="switch" defaultChecked /></SwitchRow>
      </Switches>
      <Well>在此处添加钻取字段</Well>
    </Wells>
  </Pane>
);

/* ---------- data pane ---------- */

const TreeRow = styled.div`
  display: flex;
  align-items: center;
  height: 24px;
  padding-left: 6px;
  font-family: "Noto Sans CJK SC", sans-serif;
`;
const Slot = styled.span<{ $w: number }>`
  position: relative;
  display: flex;
  align-items: center;
  justify-content: center;
  width: ${(p) => p.$w}px;
`;
const CheckBox = styled.input`
  position: relative;
  appearance: none;
  width: 12px;
  height: 12px;
  margin: 0;
  border: 1px solid #797775;
  border-radius: 2px;
  background: #fff;
  &:checked { background: ${GREEN}; border-color: ${GREEN}; }
  &:checked::after {
    content: "";
    position: absolute;
    top: 0;
    left: 3px;
    width: 4px;
    height: 7px;
    border: solid #fff;
    border-width: 0 1px 1px 0;
    transform: rotate(45deg);
  }
`;
const Badge = styled.svg`
  position: absolute;
  left: 9px;
  top: 6px;
`;

const Sigma = () => <svg width="12" height="12" fill="none" stroke={DARK} strokeWidth="1.1"><path d="M11 3V.5H1L6 6l-5 5.500h10V9" /></svg>;
const Calendar = () => (
  <svg width="12" height="12" fill="none" stroke={DARK}>
    <rect x=".5" y=".5" width="11" height="11" rx="2" /><path d="M.5 3.500h11" /><path d="M3 6.500h6M3 9h4" strokeDasharray="1 1" />
  </svg>
);
const TableIcon = () => (
  <svg width="12" height="12" fill="none" stroke={DARK} strokeWidth="1.1">
    <rect x=".5" y=".5" width="11" height="11" rx="2" /><path d="M4 .5v11M8 .5v11M.5 4h11M.5 8h11" />
  </svg>
);
const RightArrow = () => <svg width="7" height="12" fill="none" stroke="#797775"><path d="M.5.5L6 6 .5 11.500" /></svg>;

type Field = { name: string; icon?: "sum" | "date"; on?: boolean };
const tables: { name: string; open?: boolean; used?: boolean; fields: Field[] }[] = [
  {
    name: "Date",
    open: true,
    fields: [
      { name: "季度", icon: "sum" },
      { name: "季度编号", icon: "sum" },
      { name: "年", icon: "sum" },
      { name: "年份编号", icon: "sum" },
      { name: "日期", icon: "date" },
      { name: "日期1" },
      { name: "日期编号" },
      { name: "月", icon: "sum" },
      { name: "月份编号", icon: "sum" },
    ],
  },
  { name: "Department", open: true, fields: [{ name: "科室" }, { name: "科室编号" }] },
  { name: "Doctor", fields: [] },
  { name: "Projects", fields: [] },
  {
    name: "Purchase costs",
    open: true,
    used: true,
    fields: [{ name: "费用金额", icon: "sum", on: true }, { name: "科室编号" }, { name: "日期编号" }, { name: "物品类别", on: true }],
  },
];

const DataPane = () => (
  <Pane $w={181}>
    <PaneHead><h2>数据</h2><Expand /></PaneHead>
    <Search $wide>
      <SearchIcon />
      <input placeholder="搜索" aria-label="搜索数据" />
    </Search>
    {tables.map((t) => (
      <div key={t.name}>
        <TreeRow>
          <Slot $w={14}>{t.open ? <Chevron w={12} c="#797775" /> : <RightArrow />}</Slot>
          <Slot $w={18}>
            <TableIcon />
            {t.used && (
              <Badge width="12" height="12" fill="none">
                <circle cx="6" cy="6" r="6" fill={GREEN} /><path d="M3.500 6l2 2 3-3.500" stroke="#fff" strokeWidth="1.5" />
              </Badge>
            )}
          </Slot>
          <Slot $w={3} />
          {t.name}
        </TreeRow>
        {t.fields.map((f) => {
          const id = `${t.name}-${f.name}`;
          return (
            <TreeRow key={f.name}>
              <Slot $w={14} />
              <Slot $w={18}>{f.icon === "date" && <RightArrow />}</Slot>
              <CheckBox type="checkbox" id={id} defaultChecked={f.on} />
              <Slot $w={26}>
                {f.icon === "sum" && <Sigma />}
                {f.icon === "date" && <Calendar />}
              </Slot>
              <label htmlFor={id}>{f.name}</label>
            </TreeRow>
          );
        })}
      </div>
    ))}
  </Pane>
);

/* ---------- page ---------- */

export default function App() {
  return (
    <>
      <Global />
      <Shell>
        <TitleBar>
          <TitleLeft>
            <button aria-label="保存">
              <svg width="17" height="16" fill="none" stroke="#fff"><path d="M1.500.5h14v15h-12l-2-2zM4 .5v6h9v-6M5 15.500v-5h7v5M7 12v3" /></svg>
            </button>
            <button aria-label="撤消">
              <svg width="16" height="16" fill="none" stroke="#fff" strokeWidth="1.2"><path d="M1.500 1v6h6M1.500 7C5 1 11 0 13 3c3 4-2 8-7 12" /></svg>
            </button>
            <button aria-label="恢复">
              <svg width="16" height="16" fill="none" stroke="#797775" strokeWidth="1.2"><path d="M14.500 1v6h-6M14.500 7C11 1 5 0 3 3c-3 4 2 8 7 12" /></svg>
            </button>
          </TitleLeft>
          <TitleText>无标题 - Power BI Desktop</TitleText>
          <TitleRight>
            <SignIn>
              登录
              <svg width="20" height="20" fill="none" stroke="#201f1e" strokeWidth="1.5">
                <circle cx="10" cy="10" r="10" fill="#f3f2f1" stroke="none" /><circle cx="10" cy="5.5" r="2.5" /><path d="M4.500 10.500h11q0 6-5.500 6t-5.500-6z" />
              </svg>
            </SignIn>
            <WindowControls>
              <WindowButton aria-label="最小化"><svg width="10" height="11" stroke="#fff"><path d="M0 4.500h10" /></svg></WindowButton>
              <WindowButton aria-label="还原"><svg width="10" height="11" fill="none" stroke="#fff"><path d="M.5 3.500h7v7h-7zM2.500 3.500v-2h7v7h-2" /></svg></WindowButton>
              <WindowButton aria-label="关闭"><svg width="11" height="11" stroke="#fff"><path d="M0 0l11 11M11 0L0 11" /></svg></WindowButton>
            </WindowControls>
          </TitleRight>
        </TitleBar>
        <Ribbon />
        <Workspace>
          <Rail>
            <RailButton $active aria-label="报表视图">
              <svg width="14" height="14" fill="none" stroke="#201f1e" strokeWidth="1.3"><path d="M.5 0v13.500H14M3 4h2.500v7.500H3zM7 6h2v5.500H7zM10.500 2h2.500v9.500h-2.500z" /></svg>
            </RailButton>
            <RailButton aria-label="表格视图">
              <svg width="16" height="15" fill="none" stroke="#605e5c"><path d="M.5.5h15v14H.5zM.5 2.500h15M.5 6.500h15M.5 10.500h15M5.500 2.500v12M10.500 2.500v12" /></svg>
            </RailButton>
            <RailButton aria-label="模型视图">
              <svg width="18" height="18" fill="none" stroke="#605e5c"><path d="M.5 5.500h7v7h-7zM.5 8.500h7M10.500.5h7v7h-7zM10.500 3.500h7M10.500 10.500h7v7h-7zM10.500 13.500h7M4.500 5.500v-3h6M4.500 12.500v3h6" /></svg>
            </RailButton>
          </Rail>
          <Canvas>
            <TopVisuals>
              <Slicers>
                <Slicer $w={334}>
                  <SlicerHead>年<Chevron w={8} /></SlicerHead>
                  <Tiles $cols={3}>
                    {[2013, 2014, 2015].map((y) => <Tile key={y} $h={63}>{y}</Tile>)}
                  </Tiles>
                </Slicer>
                <Slicer $w={326}>
                  <SlicerHead>季度<Chevron w={8} /></SlicerHead>
                  <Tiles $cols={2}>
                    {[1, 3, 2, 4].map((q) => <Tile key={q} $h={60}>季度 {q}</Tile>)}
                  </Tiles>
                </Slicer>
              </Slicers>
              <MatrixVisual />
              <ScrollThumb />
            </TopVisuals>
            <PieVisual />
            <PageEdge />
          </Canvas>
          <FiltersPane />
          <VizPane />
          <DataPane />
        </Workspace>
      </Shell>
    </>
  );
}
